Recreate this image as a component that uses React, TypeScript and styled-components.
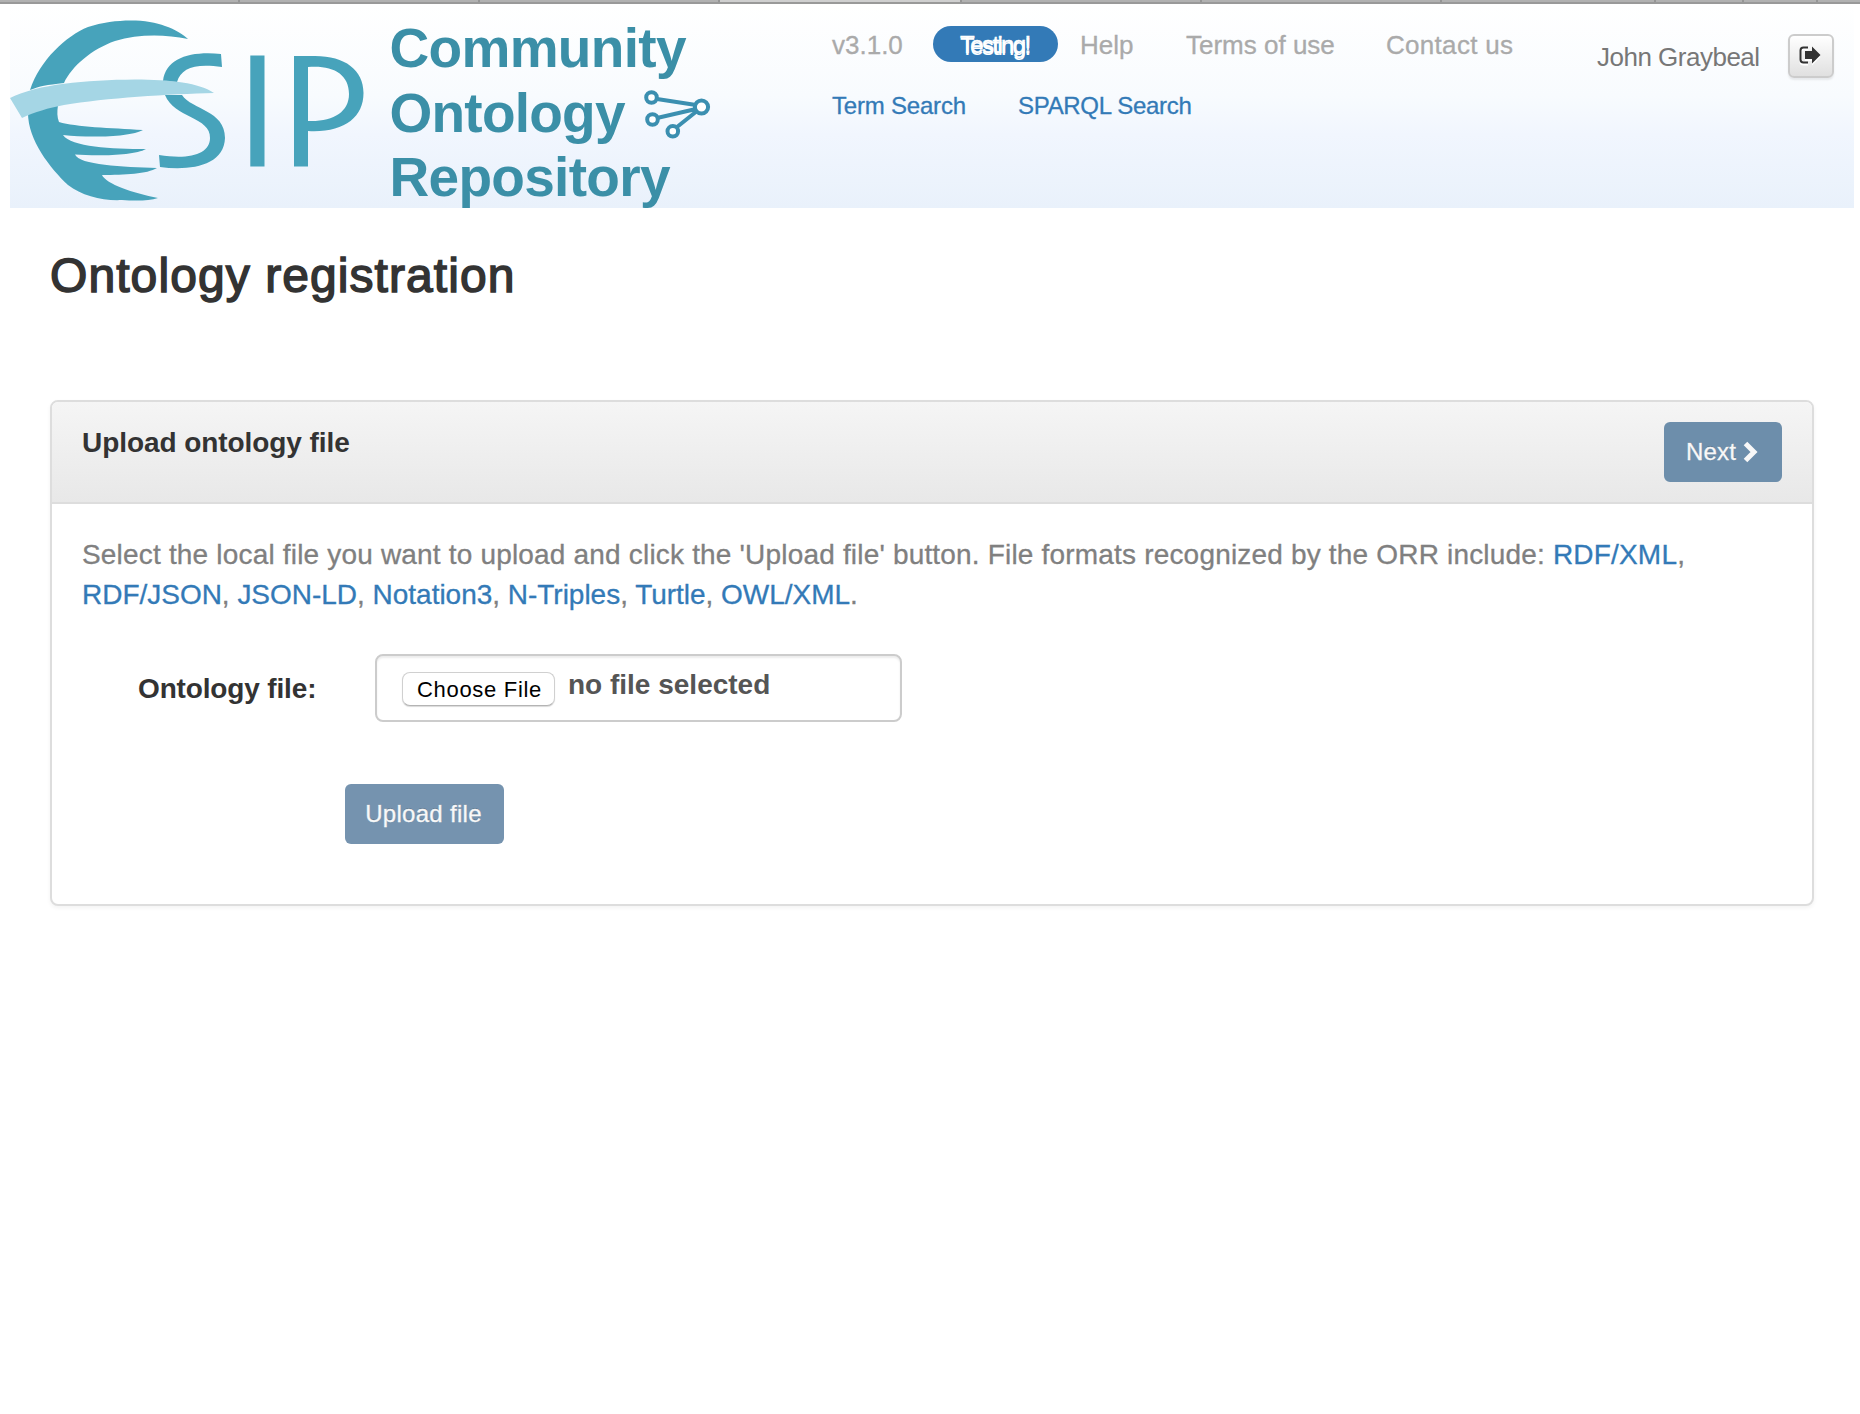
import React from "react";
import styled, { createGlobalStyle } from "styled-components";

const Global = createGlobalStyle`
  *, *::before, *::after { box-sizing: border-box; }
  body {
    margin: 0;
    background: #fff;
    color: #333;
    font-family: "Liberation Sans", Arial, sans-serif;
  }
  a { color: #337ab7; text-decoration: none; }
`;

const Page = styled.div`
  display: flex;
  flex-direction: column;
  width: 1860px;
  min-height: 1414px;
  background: #fff;
`;

const TabStrip = styled.div`
  display: flex;
  height: 4px;
  border-bottom: 2px solid #999;
`;

const Tab = styled.div<{ $w: number; $active?: boolean }>`
  width: ${(p) => p.$w}px;
  flex: none;
  background: ${(p) => (p.$active ? "#cfcfcf" : "#b1b1b1")};
  border-right: 2px solid #959595;
`;

const Banner = styled.header`
  display: flex;
  align-items: flex-start;
  height: 204px;
  margin: 0 6px 0 10px;
  background: linear-gradient(#fff 0%, #f8fbfe 45%, #f1f6fe 64%, #e9f1fb 100%);
`;

const Logo = styled.svg`
  flex: none;
  display: block;
`;

const NavArea = styled.nav`
  display: flex;
  flex-direction: column;
  width: 740px;
  margin-left: 102px;
  padding-top: 22px;
`;

const NavRow = styled.div`
  display: flex;
  height: 36px;
  align-items: center;
`;

const SearchRow = styled(NavRow)`
  margin-top: 26px;
`;

const NavItem = styled.span<{ $w: number; $ls?: number }>`
  width: ${(p) => p.$w}px;
  flex: none;
  padding-top: 2px;
  color: #aaa;
  font-size: 26px;
  line-height: 36px;
  letter-spacing: ${(p) => p.$ls ?? 0}px;
  white-space: nowrap;
  -webkit-text-stroke: 0.3px #aaa;
`;

const SearchLink = styled.a<{ $w: number; $ls: number }>`
  width: ${(p) => p.$w}px;
  flex: none;
  font-size: 24px;
  line-height: 36px;
  letter-spacing: ${(p) => p.$ls}px;
  white-space: nowrap;
  -webkit-text-stroke: 0.3px #337ab7;
`;

const Pill = styled.span`
  width: 125px;
  height: 36px;
  margin-right: 22px;
  padding-left: 27px;
  border-radius: 18px;
  background: #337ab7;
  color: #fff;
  font-size: 24px;
  line-height: 37px;
  letter-spacing: -1.65px;
  -webkit-text-stroke: 0.5px #fff;
  text-shadow: 0 2px 0 #fff;
`;

const UserName = styled.span`
  width: 191px;
  margin: 34px 0 0 25px;
  color: #777;
  font-size: 26px;
  line-height: 38px;
  letter-spacing: -0.5px;
  white-space: nowrap;
`;

const LogoutButton = styled.button`
  display: flex;
  align-items: center;
  justify-content: center;
  width: 46px;
  height: 44px;
  margin: 30px 0 0;
  padding: 0 2px 2px 0;
  border: 2px solid #ccc;
  border-radius: 6px;
  background: linear-gradient(#fff, #e0e0e0);
  box-shadow: 0 2px 2px rgba(0, 0, 0, 0.08);
`;

const LogoutIcon = styled.svg`
  filter: drop-shadow(0 2px 0 #fff);
`;

const Main = styled.main`
  display: flex;
  flex-direction: column;
  padding: 0 46px 0 50px;
`;

const Title = styled.h1`
  margin: 41px 0 0;
  font-size: 48px;
  font-weight: 400;
  line-height: 54px;
  letter-spacing: 1.08px;
  -webkit-text-stroke: 1.5px #333;
`;

const Panel = styled.section`
  height: 506px;
  margin-top: 97px;
  border: 2px solid #ddd;
  border-radius: 8px;
  background: #fff;
  box-shadow: 0 2px 4px rgba(0, 0, 0, 0.05);
  overflow: hidden;
`;

const PanelHead = styled.div`
  display: flex;
  justify-content: space-between;
  height: 102px;
  padding: 20px 30px;
  border-bottom: 2px solid #ddd;
  background: linear-gradient(#f5f5f5, #e8e8e8);
`;

const PanelTitle = styled.h2`
  margin: 5px 0 0;
  font-size: 28px;
  line-height: 32px;
  letter-spacing: -0.07px;
`;

const Primary = styled.button<{ $w: number; $bg: string; $ls: number }>`
  display: flex;
  align-items: center;
  justify-content: center;
  gap: 7px;
  width: ${(p) => p.$w}px;
  height: 60px;
  padding: 0 2px 0 0;
  border: 0;
  border-radius: 6px;
  background: ${(p) => p.$bg};
  color: #f8f8f8;
  font-family: inherit;
  font-size: 24px;
  letter-spacing: ${(p) => p.$ls}px;
  text-shadow: 0 -1px 0 rgba(0, 0, 0, 0.2);
  -webkit-text-stroke: 0.3px #f8f8f8;
`;

const PanelBody = styled.div`
  padding: 31px 30px 30px;
`;

const Intro = styled.p<{ $ls: number }>`
  margin: 0;
  color: #808080;
  font-size: 28px;
  line-height: 40px;
  letter-spacing: ${(p) => p.$ls}px;
  white-space: nowrap;
  -webkit-text-stroke: 0.3px;
`;

const Field = styled.div`
  display: flex;
  align-items: center;
  margin-top: 39px;
  height: 68px;
`;

const FieldLabel = styled.label`
  width: 238px;
  padding: 2px 0 0 56px;
  margin-right: 55px;
  font-size: 28px;
  font-weight: 700;
  letter-spacing: -0.15px;
  white-space: nowrap;
`;

const FileBox = styled.div`
  display: flex;
  align-items: flex-start;
  width: 527px;
  height: 68px;
  padding: 16px 25px;
  border: 2px solid #ccc;
  border-radius: 8px;
  box-shadow: inset 0 2px 2px rgba(0, 0, 0, 0.075);
`;

const ChooseButton = styled.button`
  width: 153px;
  height: 34px;
  padding: 2px 0 0 2px;
  border: 1px solid #d0d0d0;
  border-bottom-color: #b4b4b4;
  border-radius: 8px;
  background: #fff;
  box-shadow: 0 1px 1px rgba(0, 0, 0, 0.15);
  color: #000;
  font-family: inherit;
  font-size: 22px;
  letter-spacing: 0.7px;
  white-space: nowrap;
`;

const FileName = styled.span`
  margin: -3px 0 0 13px;
  color: #555;
  font-size: 28px;
  font-weight: 700;
  line-height: 32px;
  white-space: nowrap;
`;

const Actions = styled.div`
  display: flex;
  margin: 62px 0 0 263px;
`;

const TABS = [240, 240, 240, 242, 240, 240, 214, 88, 74, 44];

const SipLogo = () => (
  <Logo width="720" height="204" viewBox="10 4 720 204">
    <g fill="#47a3bb">
      <path d="M30 90 C40 60 66 36 88 27 C116 18 148 19 165 26 C175 29 184 35 188 39 C164 34 138 34 115 41 C92 49 72 66 64 83 C46 85 40 86 30 90 Z" />
      <path d="M28 113 C28 140 50 168 68 185 C82 196 103 201 122 200 C135 201 149 201 158 198 C133 193 106 184 102 175 C125 175 147 174 157 168 C123 167 79 165 75 154.500 C95 156 134 156 146 149 C112 149 71 147 63 135 C90 138 131 137 143 130 C110 128 76 127 59 122 C57 117 57 112 58 105 Z" />
      <path d="M221 54 L222 67 C195 63 181 68 177 82 L163 81 C166 58 190 51 221 54 Z" />
      <path d="M165 95 L182 95 C192 110 225 110 225 138 C224 166 190 171 160 167 L159 155 C190 160 210 154 210 138 C211 117 174 118 165 95 Z" />
      <rect x="250.3" y="55.5" width="14.2" height="111" />
      <path fillRule="evenodd" d="M294 56 H315 C345 56 363.500 70 363.500 93 C363.500 118 343 133 308 131 V166.500 H294 Z M308 67 V121 C333 122 349 112 349 94 C349 74 333 65 308 67 Z" />
    </g>
    <path fill="#a5d6e5" d="M10 98 C38 84 85 80 135 79.500 C170 79.500 200 83 214 93 C170 94 105 98 64 105 C48 108 35 112 22 118 Z" />
    <g fill="#3b8fa7" fontFamily="Liberation Sans, Arial, sans-serif" fontWeight="700" fontSize="55">
      <text x="389.500" y="67" textLength="297" lengthAdjust="spacing">Community</text>
      <text x="389.500" y="131.500" textLength="236" lengthAdjust="spacing">Ontology</text>
      <text x="389.500" y="195.500" textLength="281" lengthAdjust="spacing">Repository</text>
    </g>
    <g fill="none" stroke="#3b8fb0" strokeWidth="4">
      <path d="M657 99 L696 105 M657 118 L696 109 M677 127 L697 111" />
      <circle cx="651.500" cy="97.500" r="5.300" fill="#fff" />
      <circle cx="652.500" cy="119.500" r="5.300" fill="#fff" />
      <circle cx="672.800" cy="131.300" r="5.300" fill="#fff" />
      <circle cx="701.500" cy="107" r="6.600" fill="#fff" />
    </g>
  </Logo>
);

export default function App() {
  return (
    <Page>
      <Global />
      <TabStrip>
        {TABS.map((w, i) => (
          <Tab key={i} $w={w} $active={i === 3} />
        ))}
      </TabStrip>
      <Banner>
        <SipLogo />
        <NavArea>
          <NavRow>
            <NavItem $w={101}>v3.1.0</NavItem>
            <Pill>Testing!</Pill>
            <NavItem $w={106}>Help</NavItem>
            <NavItem $w={200}>Terms of use</NavItem>
            <NavItem $w={140} $ls={0.3}>Contact us</NavItem>
          </NavRow>
          <SearchRow>
            <SearchLink $w={186} $ls={-0.2}>Term Search</SearchLink>
            <SearchLink $w={190} $ls={-0.3}>SPARQL Search</SearchLink>
          </SearchRow>
        </NavArea>
        <UserName>John Graybeal</UserName>
        <LogoutButton aria-label="Sign out">
          <LogoutIcon width="22" height="18" viewBox="0 0 22 18">
            <path d="M9 1.500 H4.500 Q1.500 1.500 1.500 4.500 V13.500 Q1.500 16.500 4.500 16.500 H9" fill="none" stroke="#333" strokeWidth="2" />
            <path d="M6 5 H13 V0.500 L21.500 9 L13 17.500 V13 H6 Z" fill="#333" />
          </LogoutIcon>
        </LogoutButton>
      </Banner>
      <Main>
        <Title>Ontology registration</Title>
        <Panel>
          <PanelHead>
            <PanelTitle>Upload ontology file</PanelTitle>
            <Primary $w={118} $bg="#6d8eab" $ls={0.2}>
              Next
              <svg width="15" height="22" viewBox="0 0 15 22">
                <path d="M2.500 2.500 L11 11 L2.500 19.500" fill="none" stroke="#f8f8f8" strokeWidth="5" />
              </svg>
            </Primary>
          </PanelHead>
          <PanelBody>
            <Intro $ls={0.183}>
              Select the local file you want to upload and click the 'Upload file' button. File formats recognized by the ORR include: <a>RDF/XML</a>,
            </Intro>
            <Intro $ls={-0.02}>
              <a>RDF/JSON</a>, <a>JSON-LD</a>, <a>Notation3</a>, <a>N-Triples</a>, <a>Turtle</a>, <a>OWL/XML</a>.
            </Intro>
            <Field>
              <FieldLabel>Ontology file:</FieldLabel>
              <FileBox>
                <ChooseButton>Choose File</ChooseButton>
                <FileName>no file selected</FileName>
              </FileBox>
            </Field>
            <Actions>
              <Primary $w={159} $bg="#7593af" $ls={0.3}>Upload file</Primary>
            </Actions>
          </PanelBody>
        </Panel>
      </Main>
    </Page>
  );
}
